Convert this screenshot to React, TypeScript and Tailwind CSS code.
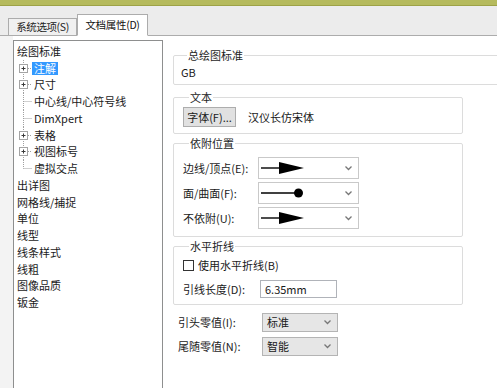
import React from 'react';

const font = { fontFamily: '"Noto Sans CJK SC", "Noto Sans", sans-serif' };

type TreeItem = { label: string; kind: 'root' | 'branch' | 'leaf'; last?: boolean; selected?: boolean };

const treeItems: TreeItem[] = [
  { label: '绘图标准', kind: 'root' },
  { label: '注解', kind: 'branch', selected: true },
  { label: '尺寸', kind: 'branch' },
  { label: '中心线/中心符号线', kind: 'leaf' },
  { label: 'DimXpert', kind: 'leaf' },
  { label: '表格', kind: 'branch' },
  { label: '视图标号', kind: 'branch' },
  { label: '虚拟交点', kind: 'leaf', last: true },
  { label: '出详图', kind: 'root' },
  { label: '网格线/捕捉', kind: 'root' },
  { label: '单位', kind: 'root' },
  { label: '线型', kind: 'root' },
  { label: '线条样式', kind: 'root' },
  { label: '线粗', kind: 'root' },
  { label: '图像品质', kind: 'root' },
  { label: '钣金', kind: 'root' },
];

function Connector({ kind, last }: { kind: 'branch' | 'leaf'; last?: boolean }) {
  return (
    <svg width="15" height="17" className="shrink-0">
      <line x1="6.5" y1="0" x2="6.5" y2={last ? 8.5 : 17} stroke="#a0a0a0" strokeDasharray="1 1" />
      {kind === 'leaf' ? (
        <line x1="6.5" y1="8.5" x2="15" y2="8.5" stroke="#a0a0a0" strokeDasharray="1 1" />
      ) : (
        <>
          <line x1="11" y1="8.5" x2="15" y2="8.5" stroke="#a0a0a0" strokeDasharray="1 1" />
          <rect x="2.5" y="4.5" width="8" height="8" fill="#fff" stroke="#a4a4a4" />
          <line x1="4.5" y1="8.5" x2="8.5" y2="8.5" stroke="#3a3a3a" />
          <line x1="6.5" y1="6.5" x2="6.5" y2="10.5" stroke="#3a3a3a" />
        </>
      )}
    </svg>
  );
}

function Chevron() {
  return (
    <svg width="7" height="5" className="shrink-0">
      <path d="M0.5 0.5 L3.5 3.5 L6.5 0.5" fill="none" stroke="#777" strokeWidth="1.3" />
    </svg>
  );
}

function ArrowSelect({ dot }: { dot?: boolean }) {
  return (
    <div className="w-[101px] h-[22px] border border-[#c9c9c9] bg-white flex items-center justify-between pr-[6px]">
      <svg width="50" height="20">
        {dot ? (
          <>
            <line x1="2" y1="10" x2="39" y2="10" stroke="#000" strokeWidth="1.4" />
            <circle cx="39.5" cy="10" r="4.5" fill="#000" />
          </>
        ) : (
          <>
            <line x1="2" y1="10" x2="24" y2="10" stroke="#000" strokeWidth="1.4" />
            <path d="M20 4 L45 10 L20 16 Z" fill="#000" />
          </>
        )}
      </svg>
      <Chevron />
    </div>
  );
}

function GraySelect({ value }: { value: string }) {
  return (
    <div className="w-[76px] h-[19px] border border-[#b4b4b4] bg-[#e6e6e6] flex items-center justify-between pl-[4px] pr-[6px]">
      <span>{value}</span>
      <Chevron />
    </div>
  );
}

function Group({ title, className, children }: { title: string; className: string; children: React.ReactNode }) {
  return (
    <fieldset className={`border border-[#dcdcdc] rounded-[2px] ${className}`}>
      <legend className="ml-[6px] px-[1px] leading-[12px] text-[#1e1e1e]">{title}</legend>
      {children}
    </fieldset>
  );
}

export default function App() {
  return (
    <div className="w-[497px] h-[388px] overflow-hidden bg-white text-[11px] text-[#1a1a1a] flex flex-col" style={font}>
      <div className="h-[6px] bg-[#b5ba5d] border-b border-[#9da247] shrink-0" />
      <div className="h-[30px] bg-[#ececec] border-b border-[#acacac] flex items-end pl-[8px] shrink-0">
        <div className="h-[18px] w-[69px] -mb-px border border-[#acacac] bg-[#f0f0f0] flex items-center justify-center whitespace-nowrap leading-none text-[10.5px] tracking-[-0.4px] text-[#222]">
          系统选项(S)
        </div>
        <div className="h-[22px] w-[71px] -mb-px border border-[#acacac] border-b-white bg-white flex items-center justify-center whitespace-nowrap leading-none text-[10.5px] tracking-[-0.3px] text-[#111]">
          文档属性(D)
        </div>
      </div>

      <div className="flex flex-1 min-h-0">
        <div className="w-[13px] bg-[#f3f3f3] shrink-0" />
        <div className="w-[150px] shrink-0 mt-[4px] h-[400px] border border-[#8e8f8f] bg-white pt-[2px] pl-[3px]">
          {treeItems.map((item) => (
            <div key={item.label} className="h-[16.75px] flex items-center">
              {item.kind === 'root' ? (
                <span className="leading-none">{item.label}</span>
              ) : (
                <>
                  <Connector kind={item.kind} last={item.last} />
                  <span
                    className={
                      item.selected
                        ? 'leading-none bg-[#3399ff] text-white px-[2px] py-[1px]'
                        : 'leading-none px-[2px]'
                    }
                  >
                    {item.label}
                  </span>
                </>
              )}
            </div>
          ))}
        </div>

        <div className="flex-1 min-w-0 pl-[10px] bg-white">
          <Group title="总绘图标准" className="w-[345px] mt-[13px] pl-[7px] pt-[5px] pb-[6px]">
            <div className="leading-[12px]">GB</div>
          </Group>

          <Group title="文本" className="w-[290px] mt-[6px] pl-[9px] pt-[4px] pb-[6px]">
            <div className="flex items-center">
              <div className="h-[20px] w-[53px] border border-[#adadad] bg-[#e1e1e1] flex items-center justify-center leading-none">
                字体(F)...
              </div>
              <span className="ml-[12px]">汉仪长仿宋体</span>
            </div>
          </Group>

          <Group title="依附位置" className="w-[290px] mt-[3px] pl-[9px] pt-[8px] pb-[7px]">
            <div className="flex flex-col gap-[3px]">
              <div className="flex items-center">
                <span className="w-[75px]">边线/顶点(E):</span>
                <ArrowSelect />
              </div>
              <div className="flex items-center">
                <span className="w-[75px]">面/曲面(F):</span>
                <ArrowSelect dot />
              </div>
              <div className="flex items-center">
                <span className="w-[75px]">不依附(U):</span>
                <ArrowSelect />
              </div>
            </div>
          </Group>

          <Group title="水平折线" className="w-[290px] mt-[3px] pl-[9px] pt-[7px] pb-[6px]">
            <div className="h-[13px] flex items-center">
              <div className="w-[11px] h-[11px] border border-[#333] bg-white" />
              <span className="ml-[4px] leading-none">使用水平折线(B)</span>
            </div>
            <div className="flex items-center mt-[8px]">
              <span className="w-[77px]">引线长度(D):</span>
              <div className="w-[77px] h-[18px] border border-[#b0b3b9] bg-white flex items-center pl-[4px]">6.35mm</div>
            </div>
          </Group>

          <div className="ml-[5px] mt-[8px] flex flex-col gap-[5px]">
            <div className="flex items-center">
              <span className="w-[84px]">引头零值(I):</span>
              <GraySelect value="标准" />
            </div>
            <div className="flex items-center">
              <span className="w-[84px]">尾随零值(N):</span>
              <GraySelect value="智能" />
            </div>
          </div>
        </div>
      </div>
    </div>
  );
}
